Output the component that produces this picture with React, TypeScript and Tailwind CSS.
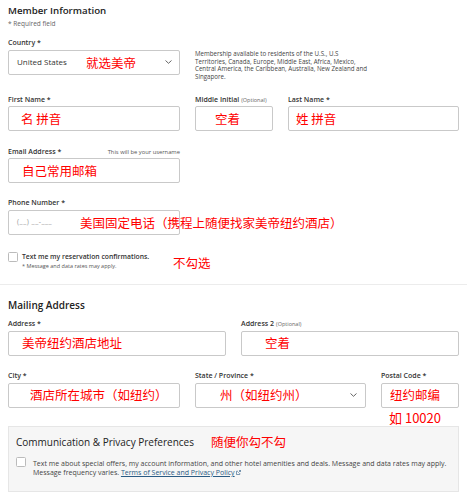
import React from 'react';

const red = 'text-[#ff0000] text-[12.5px] leading-none whitespace-nowrap';
const cjk = { fontFamily: '"Noto Sans CJK SC", "Open Sans", sans-serif' };

const Label: React.FC<{ text: string; optional?: boolean; hint?: string }> = ({ text, optional, hint }) => (
  <div className="flex items-baseline justify-between h-[9px] leading-[9px]">
    <span className="text-[7px] font-semibold text-[#333]">
      {text}
      {optional && <span className="ml-[2px] text-[5.5px] font-normal text-[#666]">(Optional)</span>}
    </span>
    {hint && <span className="text-[5.8px] text-[#555]">{hint}</span>}
  </div>
);

const Chevron = () => (
  <svg width="7" height="4" viewBox="0 0 7 4" className="shrink-0">
    <polyline points="0.5,0.5 3.5,3.3 6.5,0.5" fill="none" stroke="#555" strokeWidth="0.9" />
  </svg>
);

const Box: React.FC<{ children?: React.ReactNode; className?: string }> = ({ children, className = '' }) => (
  <div
    className={`relative mt-[2.5px] h-[25px] flex items-center border border-[#c9c9c9] rounded-[2px] bg-white ${className}`}
  >
    {children}
  </div>
);

const Checkbox = () => (
  <div className="w-[10px] h-[10px] shrink-0 border border-[#bbb] rounded-[1.5px] bg-white" />
);

export default function App() {
  return (
    <div className="w-[467px] h-[500px] bg-white text-[#333] overflow-hidden" style={{ fontFamily: '"Open Sans", sans-serif' }}>
      {/* Member Information */}
      <div className="px-2 pt-[4px]">
        <h2 className="text-[9.7px] leading-[14px] font-semibold text-[#222]">Member Information</h2>
        <p className="mt-[1px] text-[6.5px] leading-[9px] text-[#666]">* Required field</p>

        <div className="mt-[10px]">
          <Label text="Country *" />
          <div className="flex gap-[15px] items-start">
            <Box className="w-[172px] pl-[8px] pr-[7px] justify-between">
              <span className="text-[8px] text-[#333]">United States</span>
              <span className={`${red} absolute left-[77px] top-[6px]`} style={cjk}>就选美帝</span>
              <Chevron />
            </Box>
            <p className="mt-[3px] w-[176px] text-[6.2px] leading-[7.6px] text-[#444]">
              Membership available to residents of the U.S., U.S Territories, Canada, Europe, Middle East, Africa, Mexico,
              Central America, the Caribbean, Australia, New Zealand and Singapore.
            </p>
          </div>
        </div>

        <div className="mt-[14.5px] flex gap-[15px]">
          <div className="w-[172px]">
            <Label text="First Name *" />
            <Box className="pl-[12px]">
              <span className={red} style={cjk}>名 拼音</span>
            </Box>
          </div>
          <div className="w-[78px]">
            <Label text="Middle Initial" optional />
            <Box className="pl-[19px]">
              <span className={red} style={cjk}>空着</span>
            </Box>
          </div>
          <div className="w-[171px]">
            <Label text="Last Name *" />
            <Box className="pl-[7px]">
              <span className={red} style={cjk}>姓 拼音</span>
            </Box>
          </div>
        </div>

        <div className="mt-[15.5px] w-[172px]">
          <Label text="Email Address *" hint="This will be your username" />
          <Box className="pl-[13px]">
            <span className={red} style={cjk}>自己常用邮箱</span>
          </Box>
        </div>

        <div className="mt-[15px] w-[172px]">
          <Label text="Phone Number *" />
          <Box className="pl-[8px]">
            <span className="text-[7px] text-[#999] tracking-[0.5px]">(__) __-___</span>
            <span className={`${red} absolute left-[71px] top-[6px]`} style={cjk}>
              美国固定电话（携程上随便找家美帝纽约酒店）
            </span>
          </Box>
        </div>

        <div className="relative mt-[17px] flex gap-[4px]">
          <Checkbox />
          <div>
            <p className="text-[6.8px] leading-[9px] font-semibold text-[#333]">Text me my reservation confirmations.</p>
            <p className="mt-[2px] text-[5.5px] leading-[7px] text-[#555]">* Message and data rates may apply.</p>
          </div>
          <span className={`${red} absolute left-[165px] top-[5px]`} style={cjk}>不勾选</span>
        </div>
      </div>

      <div className="mt-[14px] h-px bg-[#ececec]" />

      {/* Mailing Address */}
      <div className="px-2 pt-[14.5px]">
        <h2 className="text-[10px] leading-[13px] font-semibold text-[#222]">Mailing Address</h2>

        <div className="mt-[7px] flex gap-[15px]">
          <div className="w-[218px]">
            <Label text="Address *" />
            <Box className="pl-[13px]">
              <span className={red} style={cjk}>美帝纽约酒店地址</span>
            </Box>
          </div>
          <div className="w-[218px]">
            <Label text="Address 2" optional />
            <Box className="pl-[23px]">
              <span className={red} style={cjk}>空着</span>
            </Box>
          </div>
        </div>

        <div className="mt-[15.5px] flex gap-[15px]">
          <div className="w-[172px]">
            <Label text="City *" />
            <Box className="pl-[21px]">
              <span className={red} style={cjk}>酒店所在城市（如纽约）</span>
            </Box>
          </div>
          <div className="w-[171px]">
            <Label text="State / Province *" />
            <Box className="pl-[24px] pr-[8px] justify-between">
              <span className={red} style={cjk}>州（如纽约州）</span>
              <Chevron />
            </Box>
          </div>
          <div className="relative w-[78px]">
            <Label text="Postal Code *" />
            <Box className="pl-[8px]">
              <span className={red} style={cjk}>纽约邮编</span>
            </Box>
            <span className={`${red} absolute left-[8px] top-[40px] text-[13px]`} style={cjk}>如 10020</span>
          </div>
        </div>

        {/* Communication & Privacy */}
        <div className="mt-[18.5px] h-[66px] border border-[#e6e6e6] bg-[#f6f6f6] px-[7px] pt-[8px]">
          <div className="flex items-center gap-[17px] h-[14px]">
            <h3 className="text-[10px] leading-[14px] font-medium text-[#222]">Communication &amp; Privacy Preferences</h3>
            <span className={red} style={cjk}>随便你勾不勾</span>
          </div>
          <div className="mt-[8px] flex gap-[7px]">
            <Checkbox />
            <p className="mt-[1.5px] text-[7px] leading-[9px] text-[#444]">
              Text me about special offers, my account information, and other hotel amenities and deals. Message and data rates may apply.
              <br />
              Message frequency varies.{' '}
              <a className="text-[#2a5b84] underline">Terms of Service and Privacy Policy</a>
              <svg width="5" height="5" viewBox="0 0 10 10" className="inline-block ml-[1px] align-baseline">
                <path d="M6 1h3v3M9 1 4.5 5.5M7.5 6v3h-6.5v-6.5h3" fill="none" stroke="#2a5b84" strokeWidth="1.2" />
              </svg>
            </p>
          </div>
        </div>
      </div>
    </div>
  );
}
